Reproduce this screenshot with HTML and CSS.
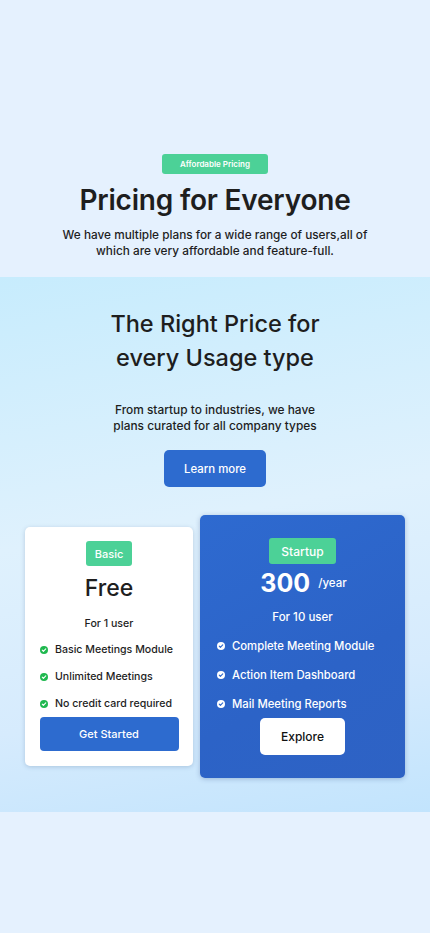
FILE: index.html
```html
<!DOCTYPE html>
<html>
<head>
<meta charset="utf-8">
<link rel="stylesheet" href="styles.css">
</head>
<body>
<section class="hero">
  <span class="tag tag-small">Affordable Pricing</span>
  <h1 class="hero-title">Pricing for Everyone</h1>
  <p class="hero-text">We have multiple plans for a wide range of users,all of<br>which are very affordable and feature-full.</p>
</section>
<section class="plans">
  <h2 class="plans-title">The Right Price for<br>every Usage type</h2>
  <p class="plans-text">From startup to industries, we have<br>plans curated for all company types</p>
  <a class="btn-learn">Learn more</a>
  <div class="cards">
    <div class="card card-basic">
      <span class="tag tag-card">Basic</span>
      <div class="price">Free</div>
      <div class="users">For 1 user</div>
      <ul class="features">
        <li><svg class="chk" viewBox="0 0 16 16"><circle cx="8" cy="8" r="8" fill="#1fb84f"/><path d="M4.5 8.3l2.3 2.3 4.7-4.8" fill="none" stroke="#fff" stroke-width="2.2" stroke-linecap="round" stroke-linejoin="round"/></svg>Basic Meetings Module</li>
        <li><svg class="chk" viewBox="0 0 16 16"><circle cx="8" cy="8" r="8" fill="#1fb84f"/><path d="M4.5 8.3l2.3 2.3 4.7-4.8" fill="none" stroke="#fff" stroke-width="2.2" stroke-linecap="round" stroke-linejoin="round"/></svg>Unlimited Meetings</li>
        <li><svg class="chk" viewBox="0 0 16 16"><circle cx="8" cy="8" r="8" fill="#1fb84f"/><path d="M4.5 8.3l2.3 2.3 4.7-4.8" fill="none" stroke="#fff" stroke-width="2.2" stroke-linecap="round" stroke-linejoin="round"/></svg>No credit card required</li>
      </ul>
      <a class="btn-start">Get Started</a>
    </div>
    <div class="card card-pro">
      <span class="tag tag-pro">Startup</span>
      <div class="price-pro"><span class="amount">300</span><span class="per">/year</span></div>
      <div class="users users-pro">For 10 user</div>
      <ul class="features features-pro">
        <li><svg class="chk" viewBox="0 0 16 16"><circle cx="8" cy="8" r="8" fill="#fff"/><path d="M4.5 8.3l2.3 2.3 4.7-4.8" fill="none" stroke="#2d67cc" stroke-width="2.2" stroke-linecap="round" stroke-linejoin="round"/></svg>Complete Meeting Module</li>
        <li><svg class="chk" viewBox="0 0 16 16"><circle cx="8" cy="8" r="8" fill="#fff"/><path d="M4.5 8.3l2.3 2.3 4.7-4.8" fill="none" stroke="#2d67cc" stroke-width="2.2" stroke-linecap="round" stroke-linejoin="round"/></svg>Action Item Dashboard</li>
        <li><svg class="chk" viewBox="0 0 16 16"><circle cx="8" cy="8" r="8" fill="#fff"/><path d="M4.5 8.3l2.3 2.3 4.7-4.8" fill="none" stroke="#2d67cc" stroke-width="2.2" stroke-linecap="round" stroke-linejoin="round"/></svg>Mail Meeting Reports</li>
      </ul>
      <a class="btn-explore">Explore</a>
    </div>
  </div>
</section>
<section class="tail"></section>
</body>
</html>
```
FILE: styles.css
```css
* { box-sizing: border-box; }
html, body { margin: 0; padding: 0; }
body {
  background: #e5f1fe;
  font-family: Inter, "Noto Sans", sans-serif;
  color: #1e1e1e;
  width: 430px;
}
.hero {
  display: flex;
  flex-direction: column;
  align-items: center;
  padding-top: 154px;
  height: 277px;
  text-align: center;
}
.tag {
  display: inline-flex;
  align-items: center;
  justify-content: center;
  background: #4cd197;
  color: #fff;
  border-radius: 3px;
  font-weight: 600;
}
.tag-small {
  width: 106px;
  height: 20px;
  font-size: 8px;
}
.hero-title {
  margin: 9px 0 0;
  font-size: 28px;
  font-weight: 600;
  line-height: 34px;
  letter-spacing: -0.2px;
}
.hero-text {
  margin: 10px 0 0;
  font-size: 11.8px;
  line-height: 16px;
  font-weight: 500;
  white-space: nowrap;
}
.plans {
  display: flex;
  flex-direction: column;
  align-items: center;
  text-align: center;
  padding: 30px 0 34px;
  background: linear-gradient(170deg, #c7ecfd 0%, #dff1fd 45%, #d6ebfd 75%, #c2e4fd 100%);
}
.plans-title {
  margin: 0;
  font-size: 23.5px;
  font-weight: 500;
  line-height: 34px;
}
.plans-text {
  margin: 27px 0 0;
  font-size: 11.9px;
  line-height: 16px;
  font-weight: 500;
}
.btn-learn {
  margin-top: 16px;
  width: 102px;
  height: 37px;
  border-radius: 5px;
  background: #2d6bcf;
  color: #fff;
  font-size: 11.4px;
  font-weight: 500;
  display: flex;
  align-items: center;
  justify-content: center;
}
.cards {
  margin-top: 28px;
  align-self: stretch;
  display: flex;
  align-items: center;
  gap: 7px;
  padding-left: 25px;
}
.card {
  border-radius: 5px;
  display: flex;
  flex-direction: column;
  align-items: center;
}
.card-basic {
  width: 168px;
  height: 239px;
  background: #fff;
  box-shadow: 0 1px 4px rgba(60, 90, 130, 0.25);
  padding-top: 14px;
}
.tag-card {
  width: 46px;
  height: 25px;
  font-size: 11px;
  font-weight: 500;
}
.price {
  margin-top: 7px;
  font-size: 23px;
  font-weight: 500;
  line-height: 30px;
}
.users {
  margin-top: 13px;
  font-size: 10.6px;
  font-weight: 500;
  line-height: 16px;
}
.features {
  list-style: none;
  margin: 4px 0 0;
  padding: 0 0 0 15px;
  align-self: stretch;
  text-align: left;
}
.features li {
  display: flex;
  align-items: center;
  height: 27px;
  font-size: 10.6px;
  font-weight: 500;
  white-space: nowrap;
}
.chk {
  width: 8px;
  height: 8px;
  margin-right: 7px;
  flex: none;
}
.btn-start {
  margin-top: 0;
  width: 139px;
  height: 34px;
  border-radius: 4px;
  background: #2d6bcf;
  color: #fff;
  font-size: 11px;
  font-weight: 500;
  display: flex;
  align-items: center;
  justify-content: center;
}
.card-pro {
  width: 205px;
  height: 263px;
  background: linear-gradient(150deg, #2e6ad0 0%, #2c63c7 60%, #2e62c4 100%);
  box-shadow: 0 1px 5px rgba(40, 70, 130, 0.3);
  color: #fff;
  padding-top: 23px;
}
.tag-pro {
  width: 67px;
  height: 26px;
  font-size: 12px;
  font-weight: 500;
}
.price-pro {
  margin-top: 2px;
  display: flex;
  align-items: center;
  padding-left: 2px;
}
.amount {
  font-size: 25px;
  font-weight: 700;
  line-height: 34px;
}
.per {
  margin-left: 8px;
  font-size: 11.5px;
  font-weight: 500;
}
.users-pro {
  margin-top: 9px;
  font-size: 11.5px;
}
.features-pro {
  margin-top: 6px;
  padding-left: 17px;
}
.features-pro li {
  height: 29px;
  font-size: 11.3px;
}
.btn-explore {
  margin-top: 0;
  width: 85px;
  height: 37px;
  border-radius: 5px;
  background: #fff;
  color: #111;
  font-size: 12px;
  font-weight: 500;
  display: flex;
  align-items: center;
  justify-content: center;
}
.tail {
  height: 121px;
}
```
